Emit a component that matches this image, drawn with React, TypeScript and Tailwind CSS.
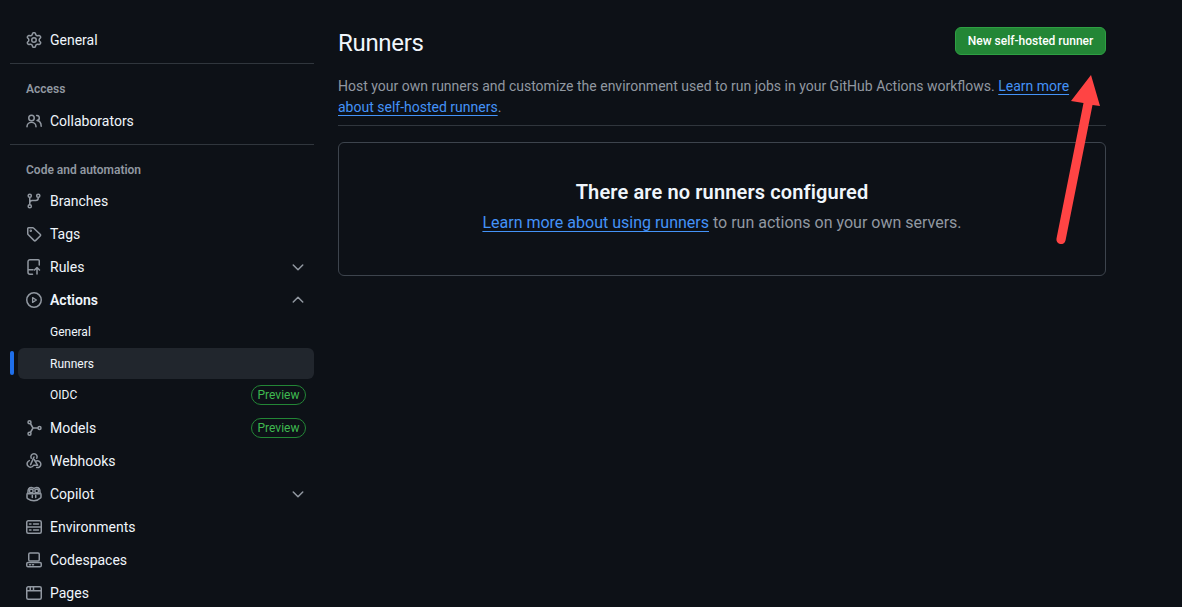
import type { ReactNode } from 'react';

// octicon-like outlines, all on a 16px grid
function Ico({ children, className }: { children: ReactNode; className?: string }) {
  return (
    <svg
      width="16"
      height="16"
      viewBox="0 0 16 16"
      fill="none"
      stroke="currentColor"
      strokeWidth="1.5"
      strokeLinecap="round"
      strokeLinejoin="round"
      className={className}
    >
      {children}
    </svg>
  );
}

const GearIcon = () => (
  <svg width="16" height="16" viewBox="0 0 16 16" fill="currentColor">
    <path d="M8 0a8.2 8.2 0 0 1 .701.031C9.444.095 9.99.645 10.16 1.29l.288 1.107c.018.066.079.158.212.224.231.114.454.243.668.386.123.082.233.09.299.071l1.103-.303c.644-.176 1.392.021 1.82.63.27.385.506.792.704 1.218.315.675.111 1.422-.364 1.891l-.814.806c-.049.048-.098.147-.088.294.016.257.016.515 0 .772-.01.147.038.246.088.294l.814.806c.475.469.679 1.216.364 1.891a7.977 7.977 0 0 1-.704 1.217c-.428.61-1.176.807-1.82.63l-1.102-.302c-.067-.019-.177-.011-.3.071a5.909 5.909 0 0 1-.668.386c-.133.066-.194.158-.211.224l-.29 1.106c-.168.646-.715 1.196-1.458 1.26a8.006 8.006 0 0 1-1.402 0c-.743-.064-1.289-.614-1.458-1.26l-.289-1.106c-.018-.066-.079-.158-.212-.224a5.738 5.738 0 0 1-.668-.386c-.123-.082-.233-.09-.299-.071l-1.103.303c-.644.176-1.392-.021-1.82-.63a8.12 8.12 0 0 1-.704-1.218c-.315-.675-.111-1.422.363-1.891l.815-.806c.05-.048.098-.147.088-.294a6.214 6.214 0 0 1 0-.772c.01-.147-.038-.246-.088-.294l-.815-.806C.635 6.045.431 5.298.746 4.623a7.92 7.92 0 0 1 .704-1.217c.428-.61 1.176-.807 1.82-.63l1.102.302c.067.019.177.011.3-.071.214-.143.437-.272.668-.386.133-.066.194-.158.211-.224l.29-1.106C6.009.645 6.556.095 7.299.03 7.53.01 7.764 0 8 0Zm-.571 1.525c-.036.003-.108.036-.137.146l-.289 1.105c-.147.561-.549.967-.998 1.189-.173.086-.34.183-.5.29-.417.278-.97.423-1.529.27l-1.103-.303c-.109-.03-.175.016-.195.045-.22.312-.412.644-.573.99-.014.031-.021.11.059.19l.815.806c.411.406.562.957.53 1.456a4.709 4.709 0 0 0 0 .582c.032.499-.119 1.05-.53 1.456l-.815.806c-.081.08-.073.159-.059.19.162.346.353.677.573.989.02.03.085.076.195.046l1.102-.303c.56-.153 1.113-.008 1.53.27.161.107.328.204.501.29.447.222.85.629.997 1.189l.289 1.105c.029.109.101.143.137.146a6.6 6.6 0 0 0 1.142 0c.036-.003.108-.036.137-.146l.289-1.105c.147-.561.549-.967.998-1.189.173-.086.34-.183.5-.29.417-.278.97-.423 1.529-.27l1.103.303c.109.029.175-.016.195-.045.22-.313.411-.644.573-.99.014-.031.021-.11-.059-.19l-.815-.806c-.411-.406-.562-.957-.53-1.456a4.709 4.709 0 0 0 0-.582c-.032-.499.119-1.05.53-1.456l.815-.806c.081-.08.073-.159.059-.19a6.464 6.464 0 0 0-.573-.989c-.02-.03-.085-.076-.195-.046l-1.102.303c-.56.153-1.113.008-1.53-.27a4.44 4.44 0 0 0-.501-.29c-.447-.222-.85-.629-.997-1.189l-.289-1.105c-.029-.11-.101-.143-.137-.146a6.6 6.6 0 0 0-1.142 0ZM11 8a3 3 0 1 1-6 0 3 3 0 0 1 6 0ZM9.5 8a1.5 1.5 0 1 0-3.001.001A1.5 1.5 0 0 0 9.5 8Z" />
  </svg>
);

const PeopleIcon = () => (
  <Ico>
    <circle cx="5.5" cy="5" r="2.75" />
    <path d="M1 13.75a4.5 4.5 0 0 1 9 0M10.6 2.5a2.5 2.5 0 0 1 .4 5c2.4.3 4.1 2.3 4.2 5.75" />
  </Ico>
);

const BranchIcon = () => (
  <Ico>
    <circle cx="3.75" cy="2.75" r="1.6" />
    <circle cx="3.75" cy="13.25" r="1.6" />
    <circle cx="12.25" cy="2.75" r="1.6" />
    <path d="M3.75 4.4v7.2M12.25 4.4V5a2.5 2.5 0 0 1-2.5 2.5h-3.5a2.5 2.5 0 0 0-2.5 2.5" />
  </Ico>
);

const TagIcon = () => (
  <Ico>
    <path d="M1.75 2.5v5.3c0 .3.1.5.3.7l5.9 5.9c.5.5 1.3.5 1.8 0l4.4-4.4c.5-.5.5-1.3 0-1.8L7.5 2c-.2-.2-.5-.3-.7-.3H2.5c-.4 0-.75.4-.75.8Z" />
    <circle cx="4.8" cy="4.8" r=".5" />
  </Ico>
);

const RulesIcon = () => (
  <Ico>
    <path d="M13.25 6V1.75a1 1 0 0 0-1-1H4a2 2 0 0 0-2 2v10.5a2 2 0 0 0 2 2h2.5M2 10.75h5M11 15V8.5M8.5 11 11 8.5l2.5 2.5" />
  </Ico>
);

const PlayIcon = () => (
  <Ico>
    <circle cx="8" cy="8" r="7.25" />
    <path d="M6.6 5.6v4.8L10.4 8Z" strokeWidth="1.3" />
  </Ico>
);

const ModelsIcon = () => (
  <Ico>
    <circle cx="3.5" cy="2.25" r="1.5" />
    <circle cx="3.5" cy="13.75" r="1.5" />
    <circle cx="13.5" cy="8" r="1.5" />
    <path d="M4.4 3.5 7 8l-2.6 4.5M7 8h5" />
  </Ico>
);

const WebhookIcon = () => (
  <Ico>
    <path d="M5.2 5.2a3.1 3.1 0 1 1 5.6 0M8 4 4.6 11.6" />
    <path d="M3.3 7.6a3.4 3.4 0 1 0 4.3 4.6h4" />
    <path d="M8.2 6.5l3.3 5.7M10.3 8a3.4 3.4 0 1 1 .3 6.5" />
  </Ico>
);

const CopilotIcon = () => (
  <Ico>
    <path d="M1 8.5c0-1 .5-1.5 1-2C1.8 3 3 1.5 5.5 1.5c1 0 2 .4 2.5 1.2.5-.8 1.5-1.2 2.5-1.2 2.5 0 3.7 1.5 3.5 5 .5.5 1 1 1 2v2.5c0 .5-.2.8-.6 1.1C13 13.6 10.5 14.75 8 14.75s-5-1.15-6.4-2.15c-.4-.3-.6-.6-.6-1.1Z" />
    <rect x="3.6" y="3.2" width="3.4" height="3.6" rx="1" />
    <rect x="9" y="3.2" width="3.4" height="3.6" rx="1" />
    <path d="M6.3 9.6v1.8M9.7 9.6v1.8M2 7.8h12" />
  </Ico>
);

const ServerIcon = () => (
  <Ico>
    <rect x=".75" y="1.75" width="14.5" height="12.5" rx="1.5" />
    <path d="M.75 8h14.5M3.5 4.9h1.5M7.5 4.9h5M3.5 11.1h1.5M7.5 11.1h5" />
  </Ico>
);

const CodespacesIcon = () => (
  <Ico>
    <rect x="2.75" y="1" width="10.5" height="8" rx="1.25" />
    <rect x=".75" y="10.5" width="14.5" height="4.25" rx="1.25" />
    <path d="M3.5 12.65h1M6.5 12.65h1" />
  </Ico>
);

const BrowserIcon = () => (
  <Ico>
    <rect x=".75" y="1.75" width="14.5" height="12.5" rx="1.5" />
    <path d="M.75 5.75h14.5M4.25 2v3.5M7.5 2v3.5" />
  </Ico>
);

function Chevron({ up }: { up?: boolean }) {
  return (
    <Ico className="ml-auto text-[#9198a1]">
      <path d={up ? 'M3.25 10 8 5.25 12.75 10' : 'M3.25 6 8 10.75 12.75 6'} />
    </Ico>
  );
}

function PreviewBadge() {
  return (
    <span className="ml-auto flex h-5 w-[55px] items-center justify-center rounded-full border border-[#238636] text-xs text-[#3fb950]">
      Preview
    </span>
  );
}

function SideItem({
  icon,
  label,
  bold,
  chevron,
  badge,
}: {
  icon: ReactNode;
  label: string;
  bold?: boolean;
  chevron?: 'up' | 'down';
  badge?: boolean;
}) {
  return (
    <div className="ml-2 flex h-[33px] items-center pl-2 pr-2">
      <span className="flex w-4 shrink-0 justify-center text-[#9198a1]">{icon}</span>
      <span className={`ml-2 text-sm text-[#f0f6fc] ${bold ? 'font-semibold' : ''}`}>{label}</span>
      {chevron === 'down' && <Chevron />}
      {chevron === 'up' && <Chevron up />}
      {badge && <PreviewBadge />}
    </div>
  );
}

function SubItem({ label, active, badge }: { label: string; active?: boolean; badge?: boolean }) {
  return (
    <div className="relative flex h-[31.8px] items-center">
      {active && <span className="absolute left-0 top-[3px] h-6 w-1 rounded bg-[#1f6feb]" />}
      <div
        className={`ml-2 flex h-[31px] w-[296px] items-center rounded-md pl-8 pr-2 text-xs text-[#f0f6fc] ${
          active ? 'bg-[#21262d]' : ''
        }`}
      >
        {label}
        {badge && <PreviewBadge />}
      </div>
    </div>
  );
}

function Heading({ children }: { children: ReactNode }) {
  return <div className="ml-2 pl-2 text-xs font-semibold leading-5 text-[#9198a1]">{children}</div>;
}

function Sidebar() {
  return (
    <nav className="w-[304px] shrink-0 pt-[23px]">
      <SideItem icon={<GearIcon />} label="General" />
      <div className="mt-[7px] h-px bg-[#30363d]" />
      <div className="mt-[15px]">
        <Heading>Access</Heading>
      </div>
      <div className="mt-[5px]">
        <SideItem icon={<PeopleIcon />} label="Collaborators" />
      </div>
      <div className="mt-[7px] h-px bg-[#30363d]" />
      <div className="mt-[15px]">
        <Heading>Code and automation</Heading>
      </div>
      <div className="mt-1">
        <SideItem icon={<BranchIcon />} label="Branches" />
        <SideItem icon={<TagIcon />} label="Tags" />
        <SideItem icon={<RulesIcon />} label="Rules" chevron="down" />
        <SideItem icon={<PlayIcon />} label="Actions" bold chevron="up" />
        <SubItem label="General" />
        <SubItem label="Runners" active />
        <SubItem label="OIDC" badge />
        <SideItem icon={<ModelsIcon />} label="Models" badge />
        <SideItem icon={<WebhookIcon />} label="Webhooks" />
        <SideItem icon={<CopilotIcon />} label="Copilot" chevron="down" />
        <SideItem icon={<ServerIcon />} label="Environments" />
        <SideItem icon={<CodespacesIcon />} label="Codespaces" />
        <SideItem icon={<BrowserIcon />} label="Pages" />
      </div>
    </nav>
  );
}

function Arrow() {
  return (
    <svg className="absolute left-[1050px] top-[70px]" width="56" height="178" viewBox="0 0 56 178">
      <path d="M41 5 21 31 33.5 33 6.5 168.5a4.6 4.6 0 0 0 9 2L42.5 35 50 36Z" fill="#ff4444" />
    </svg>
  );
}

export default function App() {
  return (
    <div
      className="relative flex h-[607px] w-[1182px] overflow-hidden bg-[#0d1117] pl-[10px]"
      style={{ fontFamily: 'Roboto, "Noto Sans", sans-serif' }}
    >
      <Sidebar />
      <main className="ml-6 w-[768px] pt-[27px]">
        <div className="flex items-start justify-between">
          <h1 className="text-2xl leading-[33px] tracking-[-0.3px] text-[#f0f6fc]">Runners</h1>
          <button className="h-7 w-[151px] rounded-md border border-[#2ea043] bg-[#238636] text-xs font-medium text-white">
            New self-hosted runner
          </button>
        </div>
        <p className="mt-4 border-b border-[#30363d] pb-[7px] text-sm leading-[21px] text-[#9198a1]">
          Host your own runners and customize the environment used to run jobs in your GitHub Actions workflows.{' '}
          <a className="text-[#4493f8] underline underline-offset-[3px]">Learn more about self-hosted runners</a>.
        </p>
        <section className="mt-4 flex h-[134px] flex-col items-center rounded-md border border-[#3d444d] pt-[35px]">
          <h2 className="text-xl font-semibold leading-7 tracking-[0.13px] text-[#f0f6fc]">
            There are no runners configured
          </h2>
          <p className="mt-[5px] text-base leading-6 text-[#9198a1]">
            <a className="text-[#4493f8] underline underline-offset-[3px]">Learn more about using runners</a> to run
            actions on your own servers.
          </p>
        </section>
      </main>
      <Arrow />
    </div>
  );
}
